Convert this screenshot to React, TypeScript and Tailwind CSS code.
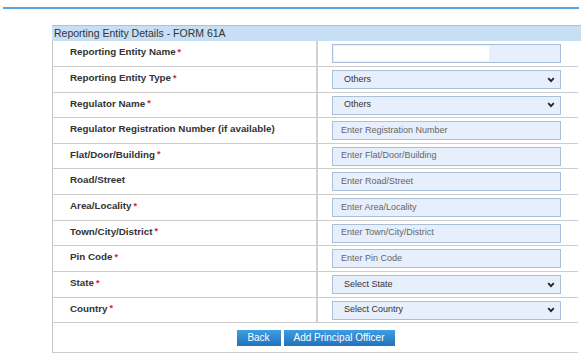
const ROWS = [
  { label: "Reporting Entity Name", req: true, kind: "name", h: "h-[26px]" },
  { label: "Reporting Entity Type", req: true, kind: "select", value: "Others", h: "h-[26px]" },
  { label: "Regulator Name", req: true, kind: "select", value: "Others", h: "h-[25px]" },
  { label: "Regulator Registration Number (if available)", req: false, kind: "input", value: "Enter Registration Number", h: "h-[26px]" },
  { label: "Flat/Door/Building", req: true, kind: "input", value: "Enter Flat/Door/Building", h: "h-[25px]" },
  { label: "Road/Street", req: false, kind: "input", value: "Enter Road/Street", h: "h-[26px]" },
  { label: "Area/Locality", req: true, kind: "input", value: "Enter Area/Locality", h: "h-[26px]" },
  { label: "Town/City/District", req: true, kind: "input", value: "Enter Town/City/District", h: "h-[25px]" },
  { label: "Pin Code", req: true, kind: "input", value: "Enter Pin Code", h: "h-[26px]" },
  { label: "State", req: true, kind: "select", value: "Select State", h: "h-[26px]" },
  { label: "Country", req: true, kind: "select", value: "Select Country", h: "h-[25px]" },
];

function Chevron() {
  return (
    <svg width="8" height="6" viewBox="0 0 8 6" className="shrink-0">
      <polyline points="1.2,1.2 4,4.2 6.8,1.2" fill="none" stroke="#222" strokeWidth="1.8" />
    </svg>
  );
}

function Field({ kind, value }: { kind: string; value?: string }) {
  if (kind === "name") {
    return (
      <div className="w-[229px] h-[19px] bg-[#e6effb] border border-[#aac0d8] flex items-center pl-[1px]">
        <div className="w-[155px] h-[15px] bg-white" />
      </div>
    );
  }
  if (kind === "select") {
    return (
      <div className="w-[229px] h-[19px] bg-[#e6effb] border border-[#aac0d8] flex items-center pl-[11px] pr-[5px] text-[9px] text-[#333]">
        <span className="flex-1">{value}</span>
        <Chevron />
      </div>
    );
  }
  return (
    <div className="w-[229px] h-[19px] bg-[#e6effb] border border-[#aac0d8] flex items-center pl-[8px] text-[9px] text-[#666]">
      {value}
    </div>
  );
}

export default function App() {
  return (
    <div className="w-[581px] h-[364px] bg-white overflow-hidden" style={{ fontFamily: '"Liberation Sans", Arial, sans-serif' }}>
      <div className="pt-[7px]">
        <div className="ml-[3px] w-[576px] h-[2px] bg-[#5aa6e2]" />
      </div>
      <div className="mt-[16px] ml-[52px] w-[529px]">
        <div className="h-[16px] bg-[#c6dff4] border-t border-[#b4c2cf] pl-[2px] text-[10.5px] leading-[15px] text-[#333]">
          Reporting Entity Details - FORM 61A
        </div>
        <div className="w-[526px] border-l border-[#c6c6c6]">
          {ROWS.map((r) => (
            <div key={r.label} className={`flex border-b border-[#cccccc] ${r.h}`}>
              <div className="w-[265px] border-r-2 border-[#d0d0d0] pl-[17px] flex items-center pb-[2px] text-[9.8px] font-bold text-[#333]">
                {r.label}
                {r.req && <span className="text-[#e02020] ml-[2px] text-[9px]">*</span>}
              </div>
              <div className="flex-1 pl-[14px] flex items-center">
                <Field kind={r.kind} value={r.value} />
              </div>
            </div>
          ))}
          <div className="h-[30px] border-b border-[#cccccc] flex items-center justify-center gap-[3px]">
            <button className="w-[44px] h-[16px] bg-gradient-to-b from-[#3f9de2] to-[#2173bb] text-white text-[10px] leading-[16px]">
              Back
            </button>
            <button className="w-[111px] h-[16px] bg-gradient-to-b from-[#3f9de2] to-[#2173bb] text-white text-[10px] leading-[16px]">
              Add Principal Officer
            </button>
          </div>
        </div>
      </div>
    </div>
  );
}
